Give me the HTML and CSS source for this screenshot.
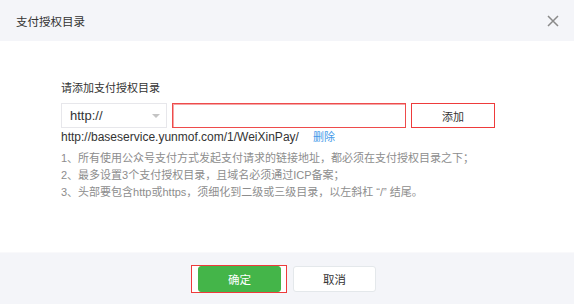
FILE: index.html
```html
<!DOCTYPE html>
<html lang="zh-CN">
<head>
    <meta charset="UTF-8">
    <title>支付授权目录</title>
    <link rel="stylesheet" href="styles.css">
</head>
<body>
    <div class="dialog">
        <div class="dialog-hd">
            <h3 class="dialog-title">支付授权目录</h3>
            <span class="dialog-close">
                <svg width="12" height="12" viewBox="0 0 12 12"><path d="M1 1L11 11M11 1L1 11" stroke="#8a8a8a" stroke-width="1.5" fill="none"/></svg>
            </span>
        </div>

        <div class="dialog-bd">
            <p class="field-label">请添加支付授权目录</p>
            <div class="input-row">
                <div class="select-box">
                    <span>http://</span>
                    <i class="arrow"></i>
                </div>
                <input type="text" class="url-input">
                <button type="button" class="btn-add">添加</button>
            </div>
            <p class="url-item">http://baseservice.yunmof.com/1/WeiXinPay/<a href="#" class="link-del">删除</a></p>
            <ul class="tips">
                <li>1、所有使用公众号支付方式发起支付请求的链接地址，都必须在支付授权目录之下；</li>
                <li>2、最多设置3个支付授权目录，且域名必须通过ICP备案；</li>
                <li>3、头部要包含http或https，须细化到二级或三级目录，以左斜杠 “/” 结尾。</li>
            </ul>
        </div>

        <div class="dialog-ft">
            <span class="btn-wrap"><button type="button" class="btn btn-primary">确定</button></span>
            <button type="button" class="btn btn-default">取消</button>
        </div>
    </div>
</body>
</html>
```

FILE: styles.css
```css
body {
    margin: 0;
    font-family: "Liberation Sans", "Noto Sans CJK SC", sans-serif;
    font-size: 12px;
    color: #333;
    background: #fff;
}

.dialog {
    width: 574px;
    height: 304px;
    display: flex;
    flex-direction: column;
}

.dialog-hd {
    height: 41px;
    background-color: #f4f5f9;
    display: flex;
    align-items: center;
    justify-content: space-between;
    padding: 0 15px 0 16px;
}

.dialog-title {
    margin: 0;
    font-size: 11.5px;
    font-weight: normal;
    color: #333;
}

.dialog-close {
    display: flex;
    width: 12px;
    height: 12px;
}

.dialog-bd {
    flex: 1;
    padding: 39px 0 0 61px;
}

.field-label {
    margin: 0;
    line-height: 16px;
    font-size: 11px;
    color: #333;
}

.input-row {
    display: flex;
    gap: 5px;
    margin-top: 7px;
    height: 25px;
}

.select-box {
    width: 106px;
    box-sizing: border-box;
    border: 1px solid #e7e7eb;
    display: flex;
    align-items: center;
    justify-content: space-between;
    padding: 0 6px 0 8px;
    font-size: 13px;
}

.select-box .arrow {
    width: 0;
    height: 0;
    border-left: 4px solid transparent;
    border-right: 4px solid transparent;
    border-top: 4px solid #c4c4c4;
}

.url-input {
    width: 234px;
    box-sizing: border-box;
    margin: 0;
    border: 1px solid #ee4b4b;
    box-shadow: inset 1px 1px 0 #f6a5a5;
    outline: none;
}

.btn-add {
    width: 84px;
    height: 25px;
    box-sizing: border-box;
    border: 1px solid #ee3b3b;
    background: #fff;
    font-family: inherit;
    font-size: 11px;
    color: #333;
    padding: 0;
}

.url-item {
    margin: 1px 0 0;
    line-height: 16px;
    font-size: 12px;
}

.link-del {
    color: #459ae9;
    text-decoration: none;
    margin-left: 14px;
    font-size: 11px;
}

.tips {
    list-style: none;
    margin: 5px 0 0;
    padding: 0;
    color: #8d8d8d;
    font-size: 11px;
    line-height: 17px;
}

.dialog-ft {
    height: 52px;
    background-color: #f4f5f9;
    border-top: 1px solid #f9f9fb;
    box-sizing: border-box;
    display: flex;
    align-items: center;
    gap: 6px;
    padding-left: 191px;
}

.btn-wrap {
    display: flex;
    border: 1px solid #ee3b3b;
    padding: 0 5px 0 6px;
    background: #fff;
}

.btn {
    width: 83px;
    height: 26px;
    border-radius: 3px;
    font-family: inherit;
    font-size: 11.5px;
    padding: 0;
}

.btn-primary {
    background-color: #44b549;
    border: 1px solid #44b549;
    color: #fff;
}

.btn-default {
    background-color: #fff;
    border: 1px solid #e4e8eb;
    color: #333;
}
```
